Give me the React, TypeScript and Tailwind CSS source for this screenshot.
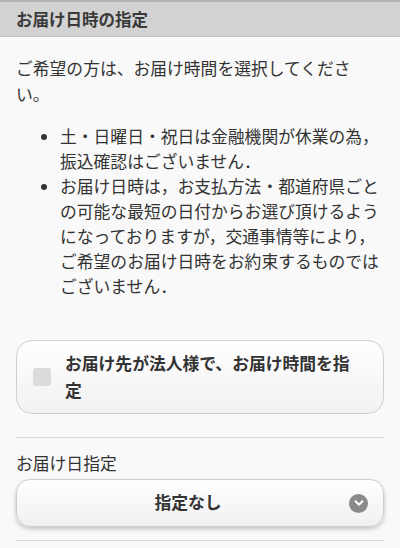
import { ChevronDown } from "lucide-react";

const font = { fontFamily: '"Noto Sans CJK JP", "Noto Sans", sans-serif' };

export default function App() {
  const notes = [
    "土・日曜日・祝日は金融機関が休業の為，振込確認はございません．",
    "お届け日時は，お支払方法・都道府県ごとの可能な最短の日付からお選び頂けるようになっておりますが，交通事情等により，ご希望のお届け日時をお約束するものではございません．",
  ];

  return (
    <div className="w-[400px] h-[548px] overflow-hidden bg-[#f9f9f9] text-[#333]" style={font}>
      <div className="h-[37px] bg-[#d2d2d2] border-t-2 border-t-[#b4b4b4] border-b border-b-[#c4c4c4] px-4 flex items-center">
        <h2 className="text-[16.5px] font-bold text-[#3a3a3a]">お届け日時の指定</h2>
      </div>

      <div className="px-4 pt-[18px]">
        <p className="text-[16.8px] leading-[26px]">
          ご希望の方は、お届け時間を選択してください。
        </p>

        <ul className="mt-[17px] pl-[44px] list-disc text-[16.8px] leading-[25px]">
          {notes.map((note, index) => (
            <li key={index}>{note}</li>
          ))}
        </ul>

        <label className="mt-[41px] flex items-center gap-[14px] rounded-[16px] border border-[#d0d0d0] bg-gradient-to-b from-white to-[#f1f1f1] pl-4 pr-5 py-[9px] min-h-[72px]">
          <span className="w-[18px] h-[18px] rounded-[3px] bg-[#dcdcdc] flex-shrink-0" />
          <span className="text-[16.8px] font-bold leading-[27px] text-[#333]">
            お届け先が法人様で、お届け時間を指定
          </span>
        </label>

        <div className="mt-[23px] border-t border-[#dcdcdc]" />

        <div className="pt-[12px] text-[16.8px] leading-[26px]">お届け日指定</div>

        <div className="mt-[3px] h-[48px] rounded-[14px] border border-[#cfcfcf] bg-gradient-to-b from-white to-[#f0f0f0] shadow-[0_2px_4px_rgba(0,0,0,0.22)] flex items-center pl-4 pr-[15px]">
          <span className="flex-1 text-center text-[16.8px] font-bold pl-[2px] pr-[8px]">指定なし</span>
          <span className="w-[19px] h-[19px] rounded-full bg-[#8a8a8a] flex items-center justify-center">
            <ChevronDown className="w-[14px] h-[14px] text-white" strokeWidth={3.5} />
          </span>
        </div>

        <div className="mt-[13px] border-t border-[#dcdcdc]" />
      </div>
    </div>
  );
}
